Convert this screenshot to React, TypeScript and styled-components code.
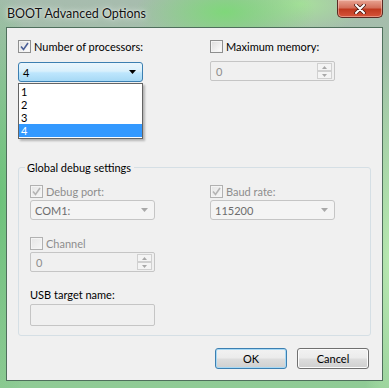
import { createGlobalStyle } from 'styled-components';
import styled from 'styled-components';

const uiFont = `Lato, "Noto Sans", "Liberation Sans", sans-serif`;

const GlobalStyle = createGlobalStyle`
  html, body {
    margin: 0;
    padding: 0;
    width: 389px;
    height: 388px;
    overflow: hidden;
    background: #8fc893;
  }
  * {
    box-sizing: border-box;
  }
`;

const Window = styled.div`
  width: 389px;
  height: 388px;
  display: flex;
  flex-direction: column;
  padding: 0 6px 7px 6px;
  font-family: ${uiFont};
  font-size: 11px;
  color: #000;
  background:
    radial-gradient(ellipse 90px 40px at 225px 12px, #7fd77a 0%, rgba(127, 215, 122, 0) 100%),
    radial-gradient(ellipse 70px 30px at 300px 4px, #a8e09c 0%, rgba(168, 224, 156, 0) 100%),
    radial-gradient(ellipse 40px 220px at 0px 200px, #6cc27a 0%, rgba(108, 194, 122, 0) 100%),
    radial-gradient(ellipse 30px 200px at 389px 260px, #b7e8b0 0%, rgba(183, 232, 176, 0) 100%),
    linear-gradient(180deg, #a7bcae 0%, #9fc4a6 30%, #8fcb95 100%);
`;

const TitleBar = styled.div`
  height: 27px;
  display: flex;
  align-items: flex-start;
  justify-content: space-between;
  flex-shrink: 0;
`;

const Title = styled.span`
  padding: 6px 0 0 1px;
  font-size: 12.5px;
  color: #111;
  text-shadow: 0 0 6px rgba(255, 255, 255, 0.9), 0 0 2px rgba(255, 255, 255, 0.8);
`;

const CloseButton = styled.div`
  width: 46px;
  height: 18px;
  display: flex;
  align-items: center;
  justify-content: center;
  border: 1px solid #5a2a22;
  border-top: none;
  border-radius: 0 0 5px 5px;
  background: linear-gradient(180deg, #e8a493 0%, #d4705b 45%, #c0391f 55%, #d6553a 100%);
  box-shadow: inset 0 0 0 1px rgba(255, 220, 210, 0.45);
`;

const Client = styled.div`
  flex: 1;
  display: flex;
  flex-direction: column;
  padding: 10px 11px 0 11px;
  background: #f0f0f0;
  border: 1px solid #4f6f5c;
`;

const TopSection = styled.div`
  display: grid;
  grid-template-columns: 125px 125px;
  column-gap: 67px;
`;

const Field = styled.div<{ $gap: number }>`
  position: relative;
  display: flex;
  flex-direction: column;
  gap: ${(p) => p.$gap}px;
`;

const CheckRow = styled.label<{ $disabled?: boolean }>`
  height: 16px;
  display: flex;
  align-items: center;
  gap: 3px;
  color: ${(p) => (p.$disabled ? '#8d8d8d' : '#000')};
  white-space: nowrap;
`;

const Box = styled.span<{ $disabled?: boolean }>`
  width: 13px;
  height: 13px;
  flex-shrink: 0;
  display: flex;
  align-items: center;
  justify-content: center;
  border: 1px solid ${(p) => (p.$disabled ? '#b1b1b1' : '#8e8f8f')};
  background: ${(p) =>
    p.$disabled
      ? 'linear-gradient(135deg, #e6e6e6, #f6f6f6)'
      : 'linear-gradient(135deg, #dcdcdc, #ffffff)'};
  box-shadow: inset 0 0 0 1px #f4f4f4;
`;

const ComboBox = styled.div<{ $active?: boolean }>`
  height: 20px;
  display: flex;
  align-items: center;
  justify-content: space-between;
  padding: 0 6px 0 4px;
  border: 1px solid ${(p) => (p.$active ? '#3c7fb1' : '#c5c5c5')};
  border-radius: 3px;
  color: ${(p) => (p.$active ? '#000' : '#6d6d6d')};
  background: ${(p) =>
    p.$active
      ? 'linear-gradient(180deg, #eaf6fd 0%, #d9f0fc 45%, #bee6fd 55%, #a7d9f5 100%)'
      : '#f4f4f4'};
`;

const DropList = styled.ul`
  position: absolute;
  top: 100%;
  left: 0;
  width: 125px;
  margin: 1px 0 0 0;
  padding: 1px 0;
  list-style: none;
  background: #fff;
  border: 1px solid #646464;
  box-shadow: 2px 2px 2px rgba(0, 0, 0, 0.25);
  z-index: 2;
`;

const DropItem = styled.li<{ $selected?: boolean }>`
  height: 13px;
  line-height: 13px;
  padding: 0 2px;
  background: ${(p) => (p.$selected ? '#3399ff' : 'transparent')};
  color: ${(p) => (p.$selected ? '#fff' : '#000')};
`;

const SpinBox = styled.div`
  height: 20px;
  display: flex;
  align-items: center;
  justify-content: space-between;
  padding: 0 2px 0 5px;
  border: 1px solid #c5c5c5;
  border-radius: 2px;
  color: #8d8d8d;
  background: #f0f0f0;
`;

const SpinButtons = styled.div`
  display: flex;
  flex-direction: column;
`;

const SpinButton = styled.div`
  width: 15px;
  height: 8px;
  display: flex;
  align-items: center;
  justify-content: center;
  border: 1px solid #d0d0d0;
  background: #f4f4f4;
`;

const GroupBox = styled.fieldset`
  margin: 79px 0 0 0;
  padding: 9px 0 9px 11px;
  border: 1px solid #d5dfe5;
  border-radius: 3px;
  min-width: 0;
`;

const Legend = styled.legend`
  padding: 0 3px 0 2px;
  margin-left: -5px;
  color: #000;
`;

const GroupGrid = styled.div`
  display: grid;
  grid-template-columns: 125px 125px;
  column-gap: 55px;
  row-gap: 15px;
`;

const PlainLabel = styled.div`
  height: 16px;
  line-height: 16px;
  color: #000;
`;

const TextBox = styled.div`
  height: 22px;
  border: 1px solid #c5c5c5;
  border-radius: 2px;
  background: #f0f0f0;
`;

const ButtonRow = styled.div`
  display: flex;
  justify-content: flex-end;
  gap: 10px;
  padding: 12px 2px 0 0;
`;

const Button = styled.div<{ $default?: boolean }>`
  width: 72px;
  height: 21px;
  display: flex;
  align-items: center;
  justify-content: center;
  border: 1px solid ${(p) => (p.$default ? '#3c7fb1' : '#707070')};
  border-radius: 3px;
  background: linear-gradient(180deg, #f2f2f2 0%, #ebebeb 48%, #dddddd 52%, #cfcfcf 100%);
  box-shadow: inset 0 0 0 1px ${(p) => (p.$default ? '#a7d9f5' : '#fcfcfc')};
`;

const CheckMark = ({ disabled }: { disabled?: boolean }) => (
  <svg width="9" height="9" viewBox="0 0 9 9">
    <path
      d="M1 4.5 L3.5 7.5 L8 1"
      fill="none"
      stroke={disabled ? '#b4b4b4' : '#4a5f97'}
      strokeWidth="1.6"
    />
  </svg>
);

const Check = ({
  label,
  checked,
  disabled,
}: {
  label: string;
  checked?: boolean;
  disabled?: boolean;
}) => (
  <CheckRow $disabled={disabled}>
    <Box $disabled={disabled}>{checked && <CheckMark disabled={disabled} />}</Box>
    {label}
  </CheckRow>
);

const Arrow = ({ color }: { color: string }) => (
  <svg width="7" height="4" viewBox="0 0 7 4">
    <path d="M0 0 L7 0 L3.5 4 Z" fill={color} />
  </svg>
);

const SmallArrow = ({ up }: { up?: boolean }) => (
  <svg width="5" height="3" viewBox="0 0 5 3">
    <path d={up ? 'M0 3 L5 3 L2.5 0 Z' : 'M0 0 L5 0 L2.5 3 Z'} fill="#a8a8a8" />
  </svg>
);

const Spin = ({ value }: { value: string }) => (
  <SpinBox>
    {value}
    <SpinButtons>
      <SpinButton>
        <SmallArrow up />
      </SpinButton>
      <SpinButton>
        <SmallArrow />
      </SpinButton>
    </SpinButtons>
  </SpinBox>
);

export default function App() {
  const processors = ['1', '2', '3', '4'];

  return (
    <>
      <GlobalStyle />
      <Window>
        <TitleBar>
          <Title>BOOT Advanced Options</Title>
          <CloseButton>
            <svg width="12" height="10" viewBox="0 0 12 10">
              <path
                d="M2 1 L10 9 M10 1 L2 9"
                stroke="#4a1a12"
                strokeWidth="3.6"
                strokeLinecap="round"
              />
              <path d="M2 1 L10 9 M10 1 L2 9" stroke="#fff" strokeWidth="2" strokeLinecap="round" />
            </svg>
          </CloseButton>
        </TitleBar>
        <Client>
          <TopSection>
            <Field $gap={8}>
              <Check label="Number of processors:" checked />
              <ComboBox $active>
                4
                <Arrow color="#000" />
              </ComboBox>
              <DropList>
                {processors.map((n) => (
                  <DropItem key={n} $selected={n === '4'}>
                    {n}
                  </DropItem>
                ))}
              </DropList>
            </Field>
            <Field $gap={7}>
              <Check label="Maximum memory:" />
              <Spin value="0" />
            </Field>
          </TopSection>

          <GroupBox>
            <Legend>Global debug settings</Legend>
            <GroupGrid>
              <Field $gap={1}>
                <Check label="Debug port:" checked disabled />
                <ComboBox>
                  COM1:
                  <Arrow color="#a8a8a8" />
                </ComboBox>
              </Field>
              <Field $gap={1}>
                <Check label="Baud rate:" checked disabled />
                <ComboBox>
                  115200
                  <Arrow color="#a8a8a8" />
                </ComboBox>
              </Field>
              <Field $gap={1}>
                <Check label="Channel" disabled />
                <Spin value="0" />
              </Field>
              <div />
              <Field $gap={1}>
                <PlainLabel>USB target name:</PlainLabel>
                <TextBox />
              </Field>
            </GroupGrid>
          </GroupBox>

          <ButtonRow>
            <Button $default>OK</Button>
            <Button>Cancel</Button>
          </ButtonRow>
        </Client>
      </Window>
    </>
  );
}
